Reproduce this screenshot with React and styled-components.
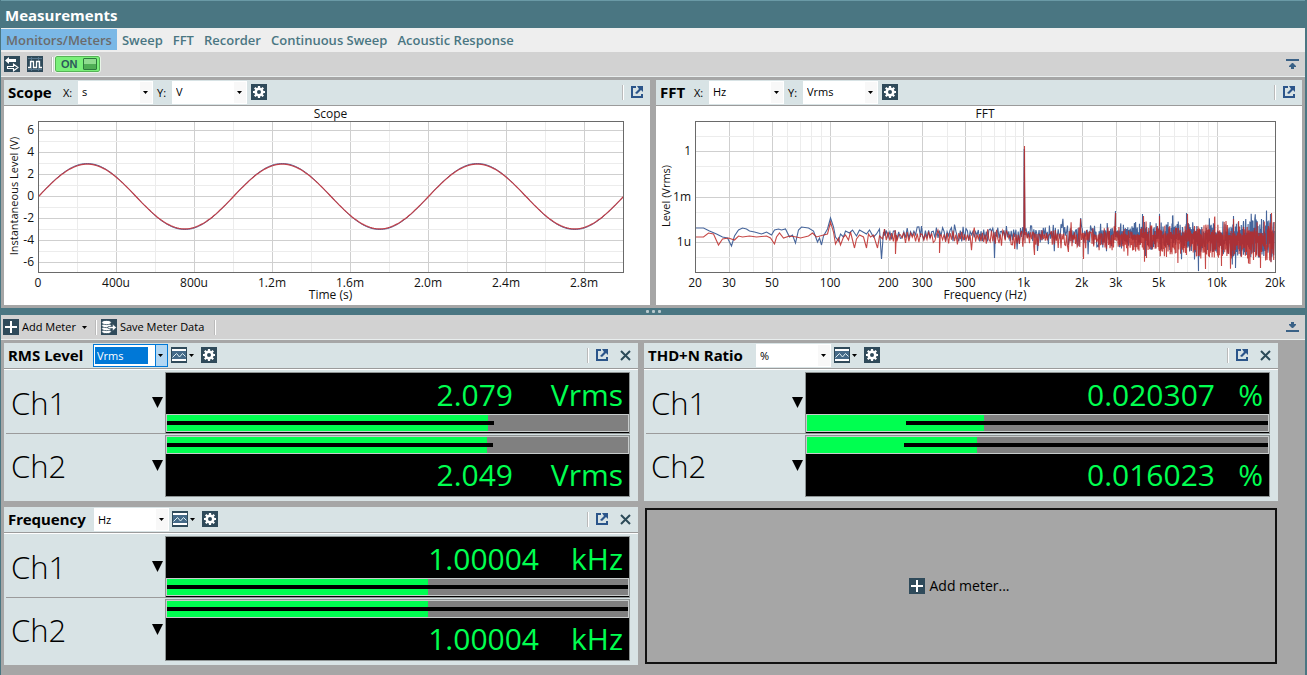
import React, { useLayoutEffect, useRef, useState } from "react";
import styled, { createGlobalStyle } from "styled-components";

const teal = "#4a7682";
const navy = "#2f4a5a";
const panel = "#d8e3e5";
const uiFont = '"Open Sans", "Noto Sans", sans-serif';

const GlobalStyle = createGlobalStyle`
  *, *::before, *::after { box-sizing: border-box; }
  body { margin: 0; background: #a6a6a6; font-family: ${uiFont}; color: #000; }
  button, select { font-family: inherit; color: inherit; margin: 0; }
  svg { display: block; flex: none; }
`;

/* ---------- layout ---------- */

const Window = styled.main`
  min-height: 100vh;
  display: flex;
  flex-direction: column;
  background: #a6a6a6;
  border: solid ${teal};
  border-width: 0 2px 0 1px;
`;

const TitleBar = styled.h1`
  margin: 0;
  height: 28px;
  padding: 2px 4px 0;
  border-top: 1px solid #6a9aa6;
  background: ${teal};
  color: #fff;
  font-size: 15px;
  line-height: 24px;
  font-weight: 700;
`;

const TabBar = styled.nav`
  display: flex;
  height: 24px;
  padding: 1px 0 2px;
  background: #eee;
`;

const Tab = styled.button`
  border: 0;
  padding: 1px 5px 0;
  font-size: 13px;
  line-height: 20px;
  font-weight: 600;
  white-space: nowrap;
  color: ${(p) => (p.$active ? "#6b6b6b" : teal)};
  background: ${(p) => (p.$active ? "#7ab8e6" : "transparent")};
`;

const Toolbar = styled.div`
  display: flex;
  align-items: center;
  height: 25px;
  padding: 0 6px 0 ${(p) => p.$left}px;
  background: #d2d2d2;
  border-bottom: 1px solid #e9eeee;
`;

const ToolGroup = styled.div`
  display: flex;
  gap: 7px;
`;

const Separator = styled.span`
  width: 2px;
  height: 15px;
  margin: 0 ${(p) => p.$after || 0}px 0 ${(p) => p.$before || 0}px;
  background: linear-gradient(90deg, #bababa 50%, #fff 50%);
`;

const Spacer = styled.span`
  flex: 1;
`;

const ToolButton = styled.button`
  display: flex;
  align-items: center;
  gap: ${(p) => p.$gap || 3}px;
  border: 0;
  padding: 0;
  background: transparent;
  font-size: 11px;
  line-height: 16px;
  white-space: nowrap;
`;

const Switch = styled.button`
  display: flex;
  align-items: center;
  justify-content: space-between;
  width: 45px;
  height: 16px;
  padding: 0 2px 0 5px;
  border: 1px solid #55b455;
  outline: 1px solid #e8f4e8;
  border-radius: 2px;
  background: #7af07a;
  color: #2c5a5c;
  font: 700 11px/14px "Liberation Sans", sans-serif;
`;

const Knob = styled.span`
  width: 14px;
  height: 12px;
  border: 1px solid #2d7a3d;
  border-radius: 1px;
  background: linear-gradient(#8fdc8f 45%, #4fae55 50%);
`;

const ChartGrid = styled.section`
  display: grid;
  grid-template-columns: 1fr 1fr;
  gap: 6px;
  padding: 3px 3px;
`;

const ChartPanel = styled.article`
  min-width: 0;
  background: #fff;
`;

const PanelHeader = styled.header`
  display: flex;
  align-items: center;
  height: 26px;
  padding: 0 7px 1px 4px;
  background: ${panel};
  border-bottom: 1px solid #9b9b9b;
`;

const PanelTitle = styled.h2`
  margin: 0;
  min-width: ${(p) => p.$width}px;
  font-family: "Noto Sans", sans-serif;
  font-size: 15px;
  line-height: 24px;
  font-weight: 700;
  white-space: nowrap;
`;

const AxisLabel = styled.label`
  display: flex;
  align-items: center;
  gap: 5px;
  margin-right: 4px;
  font-size: 11px;
`;

const AxisName = styled.span`
  min-width: 10px;
`;

const SelectBox = styled.span`
  display: grid;
  align-self: flex-end;
  width: 75px;
  height: 23px;
  align-items: center;
  background: #fff;
  border: 1px solid ${(p) => (p.$focused ? "#0078d7" : "#fff")};

  > * { grid-area: 1 / 1; }
  > svg { justify-self: end; margin-right: 4px; pointer-events: none; }
`;

const SelectArrowPad = styled.span`
  justify-self: end;
  width: 12px;
  height: 21px;
  background: ${(p) => (p.$focused ? "#b3d7f3" : "#f8f8f8")};
  border-left: 1px solid ${(p) => (p.$focused ? "#0078d7" : "#f8f8f8")};
`;

const Select = styled.select`
  appearance: none;
  width: ${(p) => (p.$focused ? 53 : 60)}px;
  height: 17px;
  margin-left: 1px;
  padding: 0 2px;
  border: 0;
  outline: 0;
  font-size: 11px;
  line-height: 16px;
  background: ${(p) => (p.$focused ? "#0078d7" : "transparent")};
  color: ${(p) => (p.$focused ? "#fff" : "#000")};
`;

const HeaderTools = styled.div`
  display: flex;
  align-items: center;
  gap: ${(p) => p.$gap || 12}px;
  margin-left: ${(p) => p.$left || 0}px;
`;

const Splitter = styled.div`
  display: flex;
  justify-content: center;
  align-items: center;
  gap: 3px;
  height: 7px;
  background: ${teal};

  i { width: 3px; height: 3px; border-radius: 1px; background: #b9c9cd; }
`;

const MeterGrid = styled.section`
  display: grid;
  grid-template-columns: 1fr 1fr;
  gap: 6px;
  padding: 3px 27px 10px 3px;
`;

const MeterPanel = styled.article`
  min-width: 0;
  background: ${panel};
`;

const MeterBody = styled.div`
  display: grid;
  grid-template-columns: 159px 1fr;
  grid-template-rows: 62px 62px;
  row-gap: 1px;
  padding: 2px 8px 4px 2px;
  border-top: 1px solid #fff;
`;

const Channel = styled.div`
  display: flex;
  align-items: center;
  justify-content: space-between;
  padding: 0 2px 0 5px;
  border-bottom: 1px solid ${(p) => (p.$ruled ? "#9b9b9b" : "transparent")};
  font-size: 31px;
  line-height: 40px;
  font-weight: 300;
`;

const IconButton = styled.button`
  display: flex;
  align-items: center;
  gap: 2px;
  border: 0;
  padding: 0;
  background: transparent;
`;

const Display = styled.div`
  display: flex;
  flex-direction: ${(p) => (p.$flipped ? "column-reverse" : "column")};
  justify-content: ${(p) => (p.$flipped ? "flex-end" : "flex-start")};
  min-width: 0;
  border: 1px solid #8e9494;
  background: #000;
`;

const Reading = styled.div`
  display: flex;
  justify-content: flex-end;
  height: ${(p) => (p.$flipped ? 42 : 41)}px;
  padding-right: 6px;
  color: #00ff50;
  font-size: 30px;
  line-height: ${(p) => (p.$flipped ? 42 : 44)}px;
`;

const Unit = styled.span`
  width: ${(p) => p.$width}px;
  text-align: right;
`;

const Bar = styled.div`
  display: grid;
  align-items: center;
  height: 18px;
  border: 1px solid #c8cccc;
  background: #808080;

  > * { grid-area: 1 / 1; }
`;

const BarFill = styled.span`
  height: 16px;
  background: #00ff50;
`;

const BarRange = styled.span`
  height: 4px;
  background: #000;
`;

const AddMeter = styled.button`
  display: flex;
  align-items: center;
  justify-content: center;
  gap: 4px;
  margin: 1px;
  padding: 0 3px 1px 0;
  border: 2px solid #111;
  background: #a6a6a6;
  font-size: 14px;
  font-weight: 400;
`;

/* ---------- icons ---------- */

const Tile = ({ children }) => (
  <svg width="16" height="16" viewBox="0 0 16 16" aria-hidden="true">
    <rect width="16" height="16" fill={navy} />
    {children}
  </svg>
);

const SwapIcon = () => (
  <Tile>
    <path d="M1 4.500 5 1v2h7v3H5v2z" fill="#fff" />
    <path d="M3.500 10.500h6V8.200l4.500 3.300-4.500 3.300v-2.300h-6z" fill="none" stroke="#fff" strokeWidth="1.100" />
  </Tile>
);

const WaveIcon = () => (
  <Tile>
    <path d="M1 2.500h14M1 13.500h14M4.500 1v14M11.500 1v14" stroke="#55758c" />
    <path d="M1 11.500h2.500v-6h3v6h3v-6h3v6H15" fill="none" stroke="#fff" strokeWidth="1.300" />
  </Tile>
);

const GearIcon = () => (
  <Tile>
    <circle cx="8" cy="8" r="3.300" fill="none" stroke="#fff" strokeWidth="2.600" />
    {[0, 45, 90, 135].map((a) => (
      <path key={a} d="M8 2v2.200M8 11.800V14" stroke="#fff" strokeWidth="2.200" transform={`rotate(${a} 8 8)`} />
    ))}
  </Tile>
);

const PlusIcon = () => (
  <Tile>
    <path d="M8 2v12M2 8h12" stroke="#fff" strokeWidth="2" />
  </Tile>
);

const SaveDataIcon = () => (
  <Tile>
    <g fill="#fff" stroke={navy} strokeWidth=".8">
      <ellipse cx="5.500" cy="12.500" rx="4.700" ry="2.100" />
      <ellipse cx="5.500" cy="9.500" rx="4.700" ry="2.100" />
      <ellipse cx="5.500" cy="6.500" rx="4.700" ry="2.100" />
      <ellipse cx="5.500" cy="3.500" rx="4.700" ry="2.100" />
    </g>
    <path d="M7 7.500h4.500V5l4 3.500-4 3.500V9.500H7z" fill="#fff" stroke={navy} strokeWidth=".6" />
  </Tile>
);

const GraphIcon = () => (
  <Tile>
    <rect x="1" y="4" width="14" height="8" fill="#456a88" />
    <path d="M1 3h14M1 13h14" stroke="#fff" strokeWidth="2" />
    <path d="M1.500 10.500 5.500 6.500l3 3.500 3-3.500 3 3" fill="none" stroke="#dff0f4" />
  </Tile>
);

const PopOutIcon = () => (
  <svg width="12" height="12" viewBox="0 0 12 12" aria-hidden="true">
    <path d="M5 1H1v10h10V8" fill="none" stroke="#2b558a" strokeWidth="2" />
    <path d="M6 0h6v6l-2-2-4 4-2-1 4-4z" fill="#2b558a" />
  </svg>
);

const CloseIcon = () => (
  <svg width="11" height="11" viewBox="0 0 11 11" aria-hidden="true">
    <path d="M1 1l9 9M10 1l-9 9" stroke="#2c4a58" strokeWidth="2" />
  </svg>
);

const Caret = () => (
  <svg width="5" height="3" viewBox="0 0 5 3" aria-hidden="true">
    <path d="M0 0h5L2.500 3z" />
  </svg>
);

const BigCaret = () => (
  <svg width="11" height="11" viewBox="0 0 11 11" aria-hidden="true">
    <path d="M0 0h11L5.500 11z" />
  </svg>
);

const DockIcon = ({ down }) => (
  <svg width="13" height="10" viewBox="0 0 13 10" aria-hidden="true">
    <g fill="#3a6186" transform={down ? "matrix(1 0 0 -1 0 10)" : undefined}>
      <path d="M0 0h13v2H0zM6 4h1l3 3v1H8v2H5V8H3V7z" />
    </g>
  </svg>
);

/* ---------- shared controls ---------- */

const UnitSelect = ({ value, label, id, focused }) => (
  <SelectBox $focused={focused}>
    <SelectArrowPad $focused={focused} />
    <Select id={id} aria-label={label} defaultValue={value} $focused={focused}>
      <option>{value}</option>
    </Select>
    <Caret />
  </SelectBox>
);

const AxisSelect = ({ axis, value, id }) => (
  <AxisLabel htmlFor={id}>
    <AxisName>{axis}:</AxisName>
    <UnitSelect id={id} value={value} />
  </AxisLabel>
);

/* ---------- charts ---------- */

const Plot = styled.svg`
  width: 100%;
  height: 199px;

  text { font-size: 12px; fill: #111; text-anchor: middle; }
`;

const TickLabel = styled.text`
  && { text-anchor: end; }
`;

const SideTitle = styled.text`
  && { font-size: 11px; }
`;

const useWidth = () => {
  const ref = useRef(null);
  const [width, setWidth] = useState(646);
  useLayoutEffect(() => {
    const measure = () => setWidth(Math.round(ref.current.getBoundingClientRect().width));
    measure();
    const observer = new ResizeObserver(measure);
    observer.observe(ref.current);
    return () => observer.disconnect();
  }, []);
  return [ref, width];
};

const TOP = 15;
const BOTTOM = 166;
const snap = (v) => Math.round(v) + 0.5;
const toPath = (points) => "M" + points.map(([x, y]) => `${x.toFixed(1)} ${y.toFixed(1)}`).join("L");

const Chart = ({ title, xTitle, yTitle, left, plotWidth, xTicks, yTicks, children, innerRef }) => (
  <Plot ref={innerRef} role="img" aria-label={title}>
    {xTicks.map((t) => (
      <path key={t.x} d={`M${snap(left + t.x)} ${TOP}V${BOTTOM}`} stroke={t.major ? "#cfcfcf" : "#ececec"} />
    ))}
    {yTicks.map((t) => (
      <path key={t.y} d={`M${left} ${snap(t.y)}H${left + plotWidth}`} stroke={t.major ? "#cfcfcf" : "#ececec"} />
    ))}
    {children}
    <rect x={left + 0.5} y={TOP + 0.5} width={plotWidth} height={BOTTOM - TOP} fill="none" stroke="#6a6a6a" />
    {xTicks.filter((t) => t.label).map((t) => (
      <text key={t.label} x={left + t.x} y={181}>{t.label}</text>
    ))}
    {yTicks.filter((t) => t.label).map((t) => (
      <TickLabel key={t.label} x={left - 4} y={t.y + 4}>{t.label}</TickLabel>
    ))}
    <text x={left + plotWidth / 2} y={12}>{title}</text>
    <text x={left + plotWidth / 2} y={193}>{xTitle}</text>
    <SideTitle transform="translate(14 90) rotate(-90)">{yTitle}</SideTitle>
  </Plot>
);

const ScopeChart = () => {
  const [ref, width] = useWidth();
  const left = 34;
  const plotWidth = width - 61;
  const names = { 0: "0", 2: "400u", 4: "800u", 6: "1.2m", 8: "1.6m", 10: "2.0m", 12: "2.4m", 14: "2.8m" };
  const xTicks = Array.from({ length: 15 }, (_, i) => ({
    x: (i * plotWidth) / 15,
    major: i % 2 === 0,
    label: names[i],
  }));
  const yTicks = Array.from({ length: 13 }, (_, i) => ({
    y: 90 - (6 - i) * 11.07,
    major: i % 2 === 0,
    label: i % 2 === 0 ? String(6 - i) : undefined,
  }));
  const wave = (amp) =>
    toPath(
      Array.from({ length: 301 }, (_, i) => [
        left + 0.5 + (i / 300) * plotWidth,
        90.5 - amp * Math.sin((i / 100) * 2 * Math.PI),
      ])
    );
  return (
    <Chart innerRef={ref} title="Scope" xTitle="Time (s)" yTitle="Instantaneous Level (V)"
      left={left} plotWidth={plotWidth} xTicks={xTicks} yTicks={yTicks}>
      <path d={wave(33)} fill="none" stroke="#4a5f98" />
      <path d={wave(32.4)} fill="none" stroke="#c0404a" strokeWidth="1.200" />
    </Chart>
  );
};

/* Low-frequency part of each trace, as [offset, height] pairs on a 580 x 151 grid. */
const blueLow = [
  [0, 107], [8, 107], [14, 110], [21, 113], [27, 116], [32, 117], [36, 125], [39, 115], [43, 109], [47, 107],
  [51, 108], [54, 110], [59, 111], [66, 113], [71, 111], [76, 114], [79, 109], [83, 108], [86, 109], [90, 108],
  [94, 116], [97, 114], [100, 122], [103, 109], [106, 106], [113, 107], [118, 110], [122, 121], [124, 117],
  [126, 124], [128, 115], [132, 108], [135, 97], [138, 106], [140, 116], [143, 120], [145, 113], [148, 116],
  [150, 110], [154, 112], [157, 109], [161, 115], [164, 109], [171, 113], [174, 109], [178, 116], [181, 113],
  [184, 108], [186, 138], [188, 111],
];
const redLow = [
  [0, 116], [8, 116], [13, 112], [18, 113], [23, 124], [27, 118], [33, 117], [39, 119], [43, 115], [47, 116],
  [54, 115], [61, 116], [71, 115], [75, 117], [79, 123], [81, 116], [84, 112], [88, 117], [94, 115], [101, 116],
  [105, 117], [113, 115], [117, 112], [121, 116], [128, 114], [132, 113], [135, 101], [138, 111], [140, 123],
  [143, 117], [145, 124], [148, 116], [150, 114], [153, 119], [155, 111], [159, 127], [161, 118], [164, 114],
  [168, 116], [171, 127], [173, 113], [175, 116], [178, 114], [182, 127], [184, 115], [187, 118],
];

const spectrum = (seed, low, center, spikes) => {
  let state = seed;
  const random = () => {
    state = (state * 1664525 + 1013904223) % 4294967296;
    return state / 4294967296;
  };
  const points = [...low];
  let x = 189;
  let down = false;
  while (x < 579) {
    const t = (x - 189) / 390;
    const spread = 6 + 4 * t + 9 * t * t;
    const r = random();
    down = random() < 0.85 ? !down : down;
    const tail = random() < 0.1 ? 1.6 : 1;
    const depth = down ? 1.2 * (0.15 + 0.85 * r) * tail : -(0.2 + 0.8 * r * r) * tail;
    points.push([x, center + 4 * t * t + spread * depth]);
    x += Math.max(0.45, 1.8 - 1.9 * t);
  }
  spikes.forEach(([sx, sy]) => points.push([sx - 0.8, 112], [sx, sy], [sx + 0.8, 114]));
  return points.sort((a, b) => a[0] - b[0]);
};

const blueTrace = spectrum(77, blueLow, 112, [
  [189, 108], [226, 105], [299, 137], [328.700, 28], [342, 130], [420, 90], [447, 93], [450, 135],
  [464, 93], [477, 95], [491, 92], [503, 150], [538, 95], [540, 147], [548, 100], [566, 98], [575, 93],
]);
const redTrace = spectrum(4021, redLow, 115, [
  [200, 133], [244, 132], [329, 25], [339, 134], [385, 98], [388, 138], [420, 92], [448, 95],
  [451, 137], [464, 95], [471, 136], [492, 93], [510, 148], [519, 97], [526, 145], [538, 98], [565, 147], [576, 92],
]);

const FftChart = () => {
  const [ref, width] = useWidth();
  const left = 39;
  const plotWidth = width - 66;
  const labels = {
    20: "20", 30: "30", 50: "50", 100: "100", 200: "200", 300: "300", 500: "500", 1000: "1k",
    2000: "2k", 3000: "3k", 5000: "5k", 10000: "10k", 20000: "20k",
  };
  const xTicks = [10, 100, 1000, 10000]
    .flatMap((d) => [1, 2, 3, 4, 5, 6, 7, 8, 9].map((m) => d * m))
    .filter((f) => f >= 20 && f <= 20000)
    .map((f) => ({ x: (Math.log10(f / 20) / 3) * plotWidth, major: !!labels[f], label: labels[f] }));
  const yTicks = Array.from({ length: 9 }, (_, i) => ({
    y: 30 + i * 15.15,
    major: i % 3 === 1,
    label: { 1: "1", 4: "1m", 7: "1u" }[i],
  }));
  const trace = (points) => toPath(points.map(([x, y]) => [left + 0.5 + (x / 580) * plotWidth, TOP + Math.min(y, 150)]));
  return (
    <Chart innerRef={ref} title="FFT" xTitle="Frequency (Hz)" yTitle="Level (Vrms)"
      left={left} plotWidth={plotWidth} xTicks={xTicks} yTicks={yTicks}>
      <path d={trace(blueTrace)} fill="none" stroke="#46659b" strokeWidth="1.100" />
      <path d={trace(redTrace)} fill="none" stroke="#bc2826" strokeOpacity=".85" strokeWidth="1.100" />
    </Chart>
  );
};

const ChartCard = ({ title, titleWidth, id, x, y, children }) => (
  <ChartPanel>
    <PanelHeader>
      <PanelTitle $width={titleWidth}>{title}</PanelTitle>
      <AxisSelect axis="X" id={`${id}-x`} value={x} />
      <AxisSelect axis="Y" id={`${id}-y`} value={y} />
      <IconButton aria-label="Settings"><GearIcon /></IconButton>
      <Spacer />
      <Separator $after={7} />
      <IconButton aria-label="Pop out"><PopOutIcon /></IconButton>
    </PanelHeader>
    {children}
  </ChartPanel>
);

/* ---------- meters ---------- */

const MeterDisplay = ({ value, unit, unitWidth, fill, from, to, flipped }) => (
  <Display $flipped={flipped}>
    <Reading $flipped={flipped}>
      <span>{value}</span>
      <Unit $width={unitWidth}>{unit}</Unit>
    </Reading>
    <Bar>
      <BarFill style={{ width: `${fill}%` }} />
      <BarRange style={{ marginLeft: `${from}%`, width: `${to - from}%` }} />
    </Bar>
  </Display>
);

const Meter = ({ title, titleWidth, unit, display, unitWidth, channels, focused }) => (
  <MeterPanel>
    <PanelHeader>
      <PanelTitle $width={titleWidth}>{title}</PanelTitle>
      <UnitSelect value={unit} label={`${title} unit`} focused={focused} />
      <HeaderTools $left={3} $gap={7}>
        <IconButton aria-label="Graph"><GraphIcon /><Caret /></IconButton>
        <IconButton aria-label="Settings"><GearIcon /></IconButton>
      </HeaderTools>
      <Spacer />
      <Separator $after={7} />
      <HeaderTools>
        <IconButton aria-label="Pop out"><PopOutIcon /></IconButton>
        <IconButton aria-label="Close"><CloseIcon /></IconButton>
      </HeaderTools>
    </PanelHeader>
    <MeterBody>
      {channels.map((c, i) => (
        <React.Fragment key={i}>
          <Channel $ruled={i === 0}>
            Ch{i + 1}
            <IconButton aria-label={`Channel ${i + 1} options`}><BigCaret /></IconButton>
          </Channel>
          <MeterDisplay {...c} unit={display} unitWidth={unitWidth} flipped={i === 1} />
        </React.Fragment>
      ))}
    </MeterBody>
  </MeterPanel>
);

const tabs = ["Monitors/Meters", "Sweep", "FFT", "Recorder", "Continuous Sweep", "Acoustic Response"];

export default function App() {
  return (
    <Window>
      <GlobalStyle />
      <TitleBar>Measurements</TitleBar>
      <TabBar>
        {tabs.map((t, i) => (
          <Tab key={t} $active={i === 0}>{t}</Tab>
        ))}
      </TabBar>
      <Toolbar $left={3}>
        <ToolGroup>
          <IconButton aria-label="Swap"><SwapIcon /></IconButton>
          <IconButton aria-label="Generator"><WaveIcon /></IconButton>
        </ToolGroup>
        <Separator $before={8} $after={2} />
        <Switch role="switch" aria-checked="true">ON<Knob /></Switch>
        <Spacer />
        <IconButton aria-label="Dock up"><DockIcon /></IconButton>
      </Toolbar>
      <ChartGrid>
        <ChartCard title="Scope" titleWidth={55} id="scope" x="s" y="V"><ScopeChart /></ChartCard>
        <ChartCard title="FFT" titleWidth={34} id="fft" x="Hz" y="Vrms"><FftChart /></ChartCard>
      </ChartGrid>
      <Splitter><i /><i /><i /></Splitter>
      <Toolbar $left={2}>
        <ToolButton $gap={6}>
          <ToolButton as="span"><PlusIcon />Add Meter</ToolButton>
          <Caret />
        </ToolButton>
        <Separator $before={8} $after={4} />
        <ToolButton><SaveDataIcon />Save Meter Data</ToolButton>
        <Separator $before={10} />
        <Spacer />
        <IconButton aria-label="Dock down"><DockIcon down /></IconButton>
      </Toolbar>
      <MeterGrid>
        <Meter title="RMS Level" titleWidth={85} unit="Vrms" display="Vrms" unitWidth={110} focused
          channels={[
            { value: "2.079", fill: 69.7, from: 0, to: 71 },
            { value: "2.049", fill: 69.5, from: 0, to: 70.7 },
          ]} />
        <Meter title="THD+N Ratio" titleWidth={108} unit="%" display="%" unitWidth={48}
          channels={[
            { value: "0.020307", fill: 38.5, from: 21.4, to: 100 },
            { value: "0.016023", fill: 36.8, from: 21, to: 100 },
          ]} />
        <Meter title="Frequency" titleWidth={86} unit="Hz" display="kHz" unitWidth={84}
          channels={[
            { value: "1.00004", fill: 56.7, from: 0, to: 100 },
            { value: "1.00004", fill: 56.7, from: 0, to: 100 },
          ]} />
        <AddMeter><PlusIcon />Add meter...</AddMeter>
      </MeterGrid>
    </Window>
  );
}
